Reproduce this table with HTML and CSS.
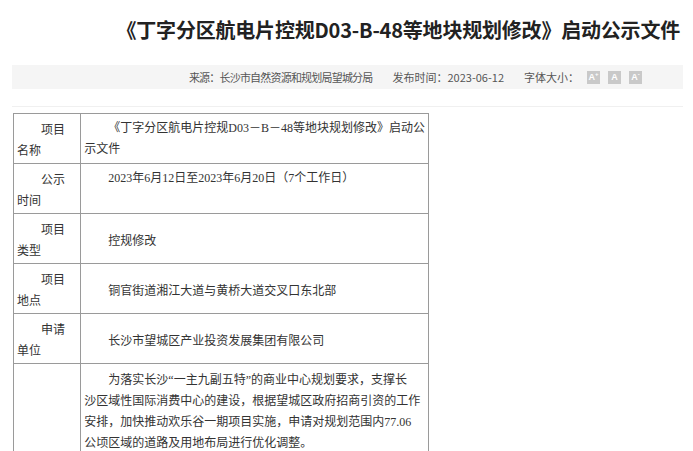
FILE: index.html
```html
<!DOCTYPE html>
<html lang="zh-CN">
<head>
    <meta charset="UTF-8">
    <meta name="viewport" content="width=device-width, initial-scale=1.0">
    <title>公示文件</title>
    <link rel="stylesheet" href="styles.css">
</head>
<body>

    <div class="page">
        <h1 class="title">《丁字分区航电片控规D03-B-48等地块规划修改》启动公示文件</h1>

        <div class="meta">
            <span>来源：长沙市自然资源和规划局望城分局</span>
            <span>发布时间：2023-06-12</span>
            <span class="size">字体大小：
                <a class="size-btn">A<sup>+</sup></a>
                <a class="size-btn">A</a>
                <a class="size-btn">A<sup>-</sup></a>
            </span>
        </div>

        <div class="content">
            <table class="info">
                <tr>
                    <td class="label">项目<br>名称</td>
                    <td class="value">《丁字分区航电片控规D03－B－48等地块规划修改》启动公<br>示文件</td>
                </tr>
                <tr>
                    <td class="label">公示<br>时间</td>
                    <td class="value top">2023年6月12日至2023年6月20日（7个工作日）</td>
                </tr>
                <tr>
                    <td class="label">项目<br>类型</td>
                    <td class="value sans">控规修改</td>
                </tr>
                <tr>
                    <td class="label">项目<br>地点</td>
                    <td class="value sans">铜官街道湘江大道与黄桥大道交叉口东北部</td>
                </tr>
                <tr>
                    <td class="label">申请<br>单位</td>
                    <td class="value sans">长沙市望城区产业投资发展集团有限公司</td>
                </tr>
                <tr>
                    <td class="label"></td>
                    <td class="value long">为落实长沙“一主九副五特”的商业中心规划要求，支撑长<br>沙区域性国际消费中心的建设，根据望城区政府招商引资的工作<br>安排，加快推动欢乐谷一期项目实施，申请对规划范围内77.06<br>公顷区域的道路及用地布局进行优化调整。</td>
                </tr>
            </table>
        </div>
    </div>

</body>
</html>
```

FILE: styles.css
```css
body {
    margin: 0;
    background: #fff;
    color: #333;
    font-family: "Noto Sans CJK SC", sans-serif;
}

.page {
    padding: 18px 10px 0 12px;
}

.title {
    margin: 0;
    padding-right: 3px;
    font-size: 20px;
    line-height: 24px;
    font-weight: bold;
    color: #222;
    text-align: right;
    letter-spacing: -0.2px;
}

.meta {
    margin-top: 23px;
    height: 24px;
    line-height: 24px;
    background-color: #f5f5f5;
    font-size: 11px;
    color: #555;
    display: flex;
    justify-content: flex-end;
    gap: 20px;
    padding-right: 41px;
}

.meta span:first-child {
    letter-spacing: -0.8px;
}

.size {
    display: flex;
    align-items: center;
}

.size-btn {
    display: inline-block;
    width: 13px;
    height: 13px;
    line-height: 13px;
    margin-left: 8px;
    background-color: #c9c9c9;
    color: #fff;
    font-family: "Liberation Sans", sans-serif;
    font-size: 9px;
    font-weight: bold;
    text-align: center;
}

.size-btn sup {
    font-size: 6px;
    line-height: 0;
}

.content {
    margin-top: 17px;
    border-top: 1px solid #f0f0f0;
    padding-top: 6px;
}

.info {
    border-collapse: collapse;
    width: 416px;
    margin-left: 1px;
    font-family: "Liberation Serif", "Noto Sans CJK SC", serif;
    font-size: 12px;
    line-height: 21px;
    color: #333;
}

.info td {
    border: 1px solid #9a9a9a;
    padding: 4px 3px 3px;
    vertical-align: middle;
    text-indent: 2em;
    white-space: nowrap;
}

.info .label {
    width: 62px;
    font-family: "Noto Sans CJK SC", sans-serif;
}

.info .value.top {
    padding-bottom: 24px;
}

.info .sans {
    font-family: "Noto Sans CJK SC", sans-serif;
}

.info .long {
    vertical-align: top;
    padding-top: 6px;
    padding-bottom: 140px;
}
```
